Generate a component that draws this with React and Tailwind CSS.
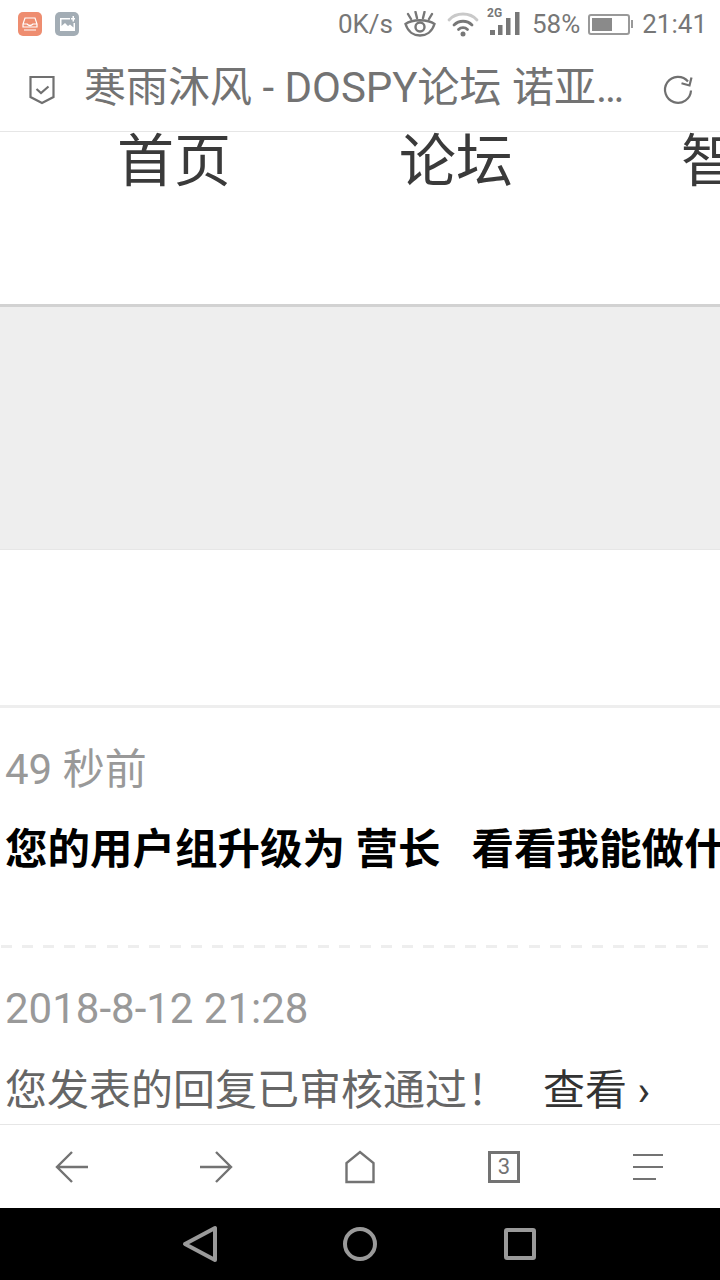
import React from 'react';

const cjk = "font-['Roboto','Noto_Sans_CJK_SC',sans-serif]";

const StatusIcons = () => (
  <div className="flex items-center text-[26px] leading-none text-[#777777]">
    <span>0K/s</span>
    {/* eye */}
    <svg width="32" height="26" viewBox="0 0 32 26" fill="none" stroke="#777777" strokeWidth="2.4" strokeLinecap="round" className="ml-[11px]">
      <path d="M1.500 13 C8 8 24 8 30.500 13 C28 21 22 24.500 16 24.500 C10 24.500 4 21 1.500 13 Z" />
      <circle cx="16" cy="16" r="4.500" />
      <path d="M4 3l3 5M11.500 1l1.500 6M20.500 1L19 7M28 3l-3 5" />
    </svg>
    {/* wifi */}
    <svg width="32" height="26" viewBox="0 0 32 26" fill="none" strokeLinecap="round" className="ml-[11px]">
      <path d="M2 9 C9 1 23 1 30 9" stroke="#c9c9c9" strokeWidth="2.800" />
      <path d="M7 14 C12 9 20 9 25 14" stroke="#777777" strokeWidth="2.800" />
      <path d="M11.500 18.500 C14 16 18 16 20.500 18.500" stroke="#777777" strokeWidth="2.800" />
      <circle cx="16" cy="23" r="2.500" fill="#777777" />
    </svg>
    {/* signal */}
    <svg width="33" height="29" viewBox="0 0 33 29" className="ml-[8px] mb-[5px]" fill="#777777">
      <text x="0" y="10" fontSize="12" fontWeight="700" fontFamily="Roboto, sans-serif">2G</text>
      <rect x="3" y="23" width="5" height="5" />
      <rect x="11" y="18" width="4.500" height="10" />
      <rect x="19" y="11" width="4.500" height="17" />
      <rect x="28" y="5" width="4.500" height="23" />
    </svg>
    <span className="ml-[12px]">58%</span>
    {/* battery */}
    <div className="ml-[8px] flex items-center">
      <div className="w-[42px] h-[21px] border-2 border-[#999999] rounded-[3px] p-[2px]">
        <div className="w-[20px] h-full bg-[#8a8a8a]" />
      </div>
      <div className="w-[2px] h-[8px] bg-[#999999] ml-[1px]" />
    </div>
    <span className="ml-[9px]">21:41</span>
  </div>
);

const AddressBar = () => (
  <div className="h-[84px] shrink-0 flex items-center border-b border-[#e6e6e6] pl-[29px] pr-[26px]">
    <svg width="26" height="30" viewBox="0 0 26 30" fill="none" stroke="#707070" strokeWidth="2.200" className="shrink-0">
      <path d="M1.500 2h23v20l-11.500 6-11.500-6z" />
      <path d="M7.500 14l4.500 4 7.500-6.500" />
    </svg>
    <div className="ml-[29px] mb-[4px] flex-1 truncate text-[42px] leading-none text-[#737373]">寒雨沐风 - DOSPY论坛 诺亚方舟</div>
    <svg width="32" height="32" viewBox="0 0 32 32" fill="none" stroke="#707070" strokeWidth="2.200" className="ml-[36px] shrink-0">
      <path d="M29 16.500A13 13 0 1 1 26 7.500" />
      <path d="M29.500 3.500l-2 8-8-2.200" />
    </svg>
  </div>
);

const Content = () => (
  <div className="flex-1 min-h-0 overflow-hidden">
    <div className="h-[172px] flex text-[57px] leading-none text-[#3a3a3a] pl-[117px] whitespace-nowrap">
      <span className="w-[282px] shrink-0 mt-[1px]">首页</span>
      <span className="w-[282px] shrink-0 mt-[1px]">论坛</span>
      <span className="w-[282px] shrink-0 mt-[1px]">智能</span>
    </div>
    <div className="h-[246px] bg-[#eeeeee] border-t-[3px] border-b border-t-[#d2d2d2] border-b-[#e6e6e6]" />
    <div className="h-[158px] border-b-[3px] border-[#eeeeee]" />
    <div className="pl-[5px] h-[237px] whitespace-nowrap">
      <div className="pt-[40px] text-[42px] leading-[44px] text-[#999999]">49 秒前</div>
      <div className="mt-[36px] text-[42.5px] leading-[44px] font-bold text-black">
        您的用户组升级为 营长<span className="ml-[31px]">看看我能做什么</span>
      </div>
    </div>
    <div className="h-[3px] mr-[6px] bg-[repeating-linear-gradient(90deg,transparent_0,transparent_1px,#eeeeee_1px,#eeeeee_12px,transparent_12px,transparent_21.100px)]" />
    <div className="pl-[5px] whitespace-nowrap">
      <div className="pt-[39px] text-[42px] leading-[44px] text-[#999999]">2018-8-12 21:28</div>
      <div className="mt-[38px] text-[42px] leading-[44px] text-[#666666]">
        您发表的回复已审核通过！<span className="ml-[34px] text-[#333333]">查看 ›</span>
      </div>
    </div>
  </div>
);

const BottomBar = () => (
  <div className="h-[84px] shrink-0 bg-white border-t border-[#e6e6e6] grid grid-cols-5 items-center justify-items-center">
    <svg width="34" height="34" viewBox="0 0 34 34" fill="none" stroke="#737373" strokeWidth="2.400">
      <path d="M33 17H2M17 2L2 17l15 15" />
    </svg>
    <svg width="34" height="34" viewBox="0 0 34 34" fill="none" stroke="#737373" strokeWidth="2.400">
      <path d="M1 17h31M17 2l15 15-15 15" />
    </svg>
    <svg width="30" height="34" viewBox="0 0 30 34" fill="none" stroke="#737373" strokeWidth="2.400">
      <path d="M1.500 32V13L15 2l13.500 11v19z" />
    </svg>
    <div className="w-[32px] h-[32px] border-[3px] border-[#737373] flex items-center justify-center text-[22px] leading-none text-[#737373]">3</div>
    <div className="w-[30px] flex flex-col gap-[10px]">
      <div className="h-[2px] bg-[#737373]" />
      <div className="h-[2px] bg-[#737373]" />
      <div className="h-[2px] w-[23px] bg-[#737373]" />
    </div>
  </div>
);

const NavBar = () => (
  <div className="h-[72px] shrink-0 bg-black flex items-center justify-center">
    <div className="w-[160px] flex justify-center">
      <svg width="36" height="38" viewBox="0 0 36 38" fill="none" stroke="#9a9a9a" strokeWidth="4" strokeLinejoin="round">
        <path d="M33 3v32L3 19z" />
      </svg>
    </div>
    <div className="w-[160px] flex justify-center">
      <svg width="36" height="36" viewBox="0 0 36 36" fill="none" stroke="#9a9a9a" strokeWidth="4">
        <circle cx="18" cy="18" r="15" />
      </svg>
    </div>
    <div className="w-[160px] flex justify-center">
      <div className="w-[32px] h-[32px] border-4 border-[#9a9a9a] rounded-[3px]" />
    </div>
  </div>
);

const App = () => {
  return (
    <div className={`w-[720px] h-[1280px] bg-white flex flex-col overflow-hidden ${cjk}`}>
      <div className="h-[48px] shrink-0 flex items-center justify-between pl-[18px] pr-[13px]">
        <div className="flex items-center gap-[13px]">
          <div className="w-[24px] h-[24px] rounded-[5px] bg-[#ee8d70] flex items-center justify-center">
            <svg width="16" height="16" viewBox="0 0 16 16" fill="none" stroke="#ffffff" strokeWidth="1.200">
              <path d="M3 2h10l2 6v3H1V8zM1 8h4q3 3 6 0h4M2 14h12" />
            </svg>
          </div>
          <div className="w-[24px] h-[24px] rounded-[5px] bg-[#a3adb5] flex items-center justify-center">
            <svg width="16" height="16" viewBox="0 0 16 16" fill="#ffffff">
              <path d="M1 2h10v1.500H2.500V10L6 7l3 3 2-1.500 3.500 3V7H16v8H1z" />
              <path d="M12 2h1.500V0H15v2h1v1.500h-1v2h-1.500v-2H12z" />
            </svg>
          </div>
        </div>
        <StatusIcons />
      </div>
      <AddressBar />
      <Content />
      <BottomBar />
      <NavBar />
    </div>
  );
};

export default App;
